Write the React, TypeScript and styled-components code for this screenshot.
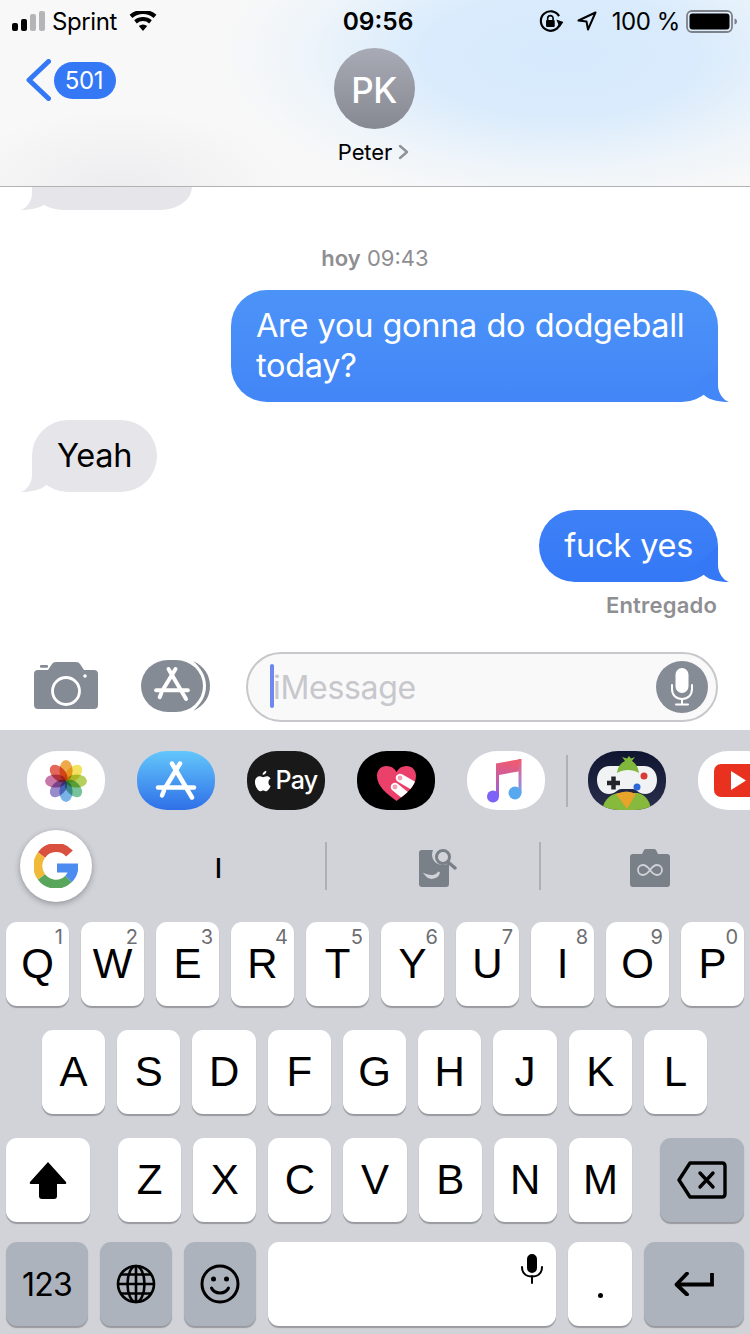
import React from 'react';
import styled, { createGlobalStyle } from 'styled-components';

const Global = createGlobalStyle`
  html, body { margin: 0; padding: 0; background: #fff; }
  * { box-sizing: border-box; }
`;

const Screen = styled.div`
  width: 750px; height: 1334px; overflow: hidden; display: flex; flex-direction: column;
  font-family: Inter, "Liberation Sans", sans-serif; color: #000; background: #fff;
`;

/* header */
const Header = styled.header`
  position: relative; z-index: 1;
  height: 187px; flex: none; display: flex; flex-direction: column;
  border-bottom: 1px solid #b2b2b4;
  background:
    radial-gradient(ellipse 170px 80px at 120px 190px, rgba(225,225,230,.5), rgba(225,225,230,0) 100%),
    radial-gradient(ellipse 340px 150px at 560px 55px, #d6eafd 0%, #d9ebfc 40%, rgba(226,240,252,.45) 75%, rgba(248,248,248,0) 100%),
    #f8f8f8;
`;
const StatusBar = styled.div`
  height: 42px; display: grid; grid-template-columns: 1fr auto 1fr; align-items: center; padding: 0 12px 0 12px; font-size: 24px;
`;
const StatusLeft = styled.div`display: flex; align-items: center; gap: 8px;`;
const StatusRight = styled.div`display: flex; align-items: center; justify-content: flex-end; gap: 12px;`;
const Carrier = styled.span`margin-right: 4px; letter-spacing: -.4px; margin-left: -1px;`;
const Clock = styled.span`font-weight: 600; font-size: 24.500px; margin-left: 6px;`;
const Percent = styled.span`letter-spacing: -.4px; margin-left: 3px; margin-right: -6px;`;
const Bars = styled.div`display: flex; align-items: flex-end; gap: 3px; height: 20px;`;
const Bar = styled.i<{ $h: number; $on?: boolean }>`
  display: block; width: 6px; height: ${p => p.$h}px; border-radius: 2px; background: ${p => (p.$on ? '#000' : '#b5b5b7')};
`;
const NavRow = styled.div`
  flex: 1; display: grid; grid-template-columns: 1fr auto 1fr; padding: 6px 28px 0 26px;
`;
const Back = styled.div`display: flex; align-items: center; gap: 3px; height: 40px; margin-top: 12px; align-self: start;`;
const Badge = styled.span`
  width: 62px; height: 37px; border-radius: 19px; background: #3478f6; color: #fff; font-size: 24px; padding-right: 2px;
  display: flex; align-items: center; justify-content: center; letter-spacing: -.3px;
`;
const Contact = styled.div`display: flex; flex-direction: column; align-items: center;`;
const Avatar = styled.div`
  width: 81px; height: 81px; border-radius: 50%; background: linear-gradient(#a8abb5, #868991); color: #fff;
  font-size: 35px; font-weight: 500; padding-top: 2px; letter-spacing: -.5px;
  display: flex; align-items: center; justify-content: center;
`;
const ContactName = styled.div`
  display: flex; align-items: center; gap: 6px; margin-top: 9px; font-size: 22px; line-height: 28px; letter-spacing: -.1px; margin-left: -1px;
`;

/* thread */
const Thread = styled.main`
  flex: 1; min-height: 0; display: flex; flex-direction: column; padding: 0 32px;
`;
const CutBubble = styled.div`
  position: relative; width: 160px; height: 23px; background: #e5e5ea; border-radius: 0 0 32px 32px / 0 0 23px 23px; flex: none;
`;
const Stamp = styled.div`
  margin-top: 34px; text-align: center; font-size: 22px; line-height: 28px; color: #8e8e93;
  b { font-weight: 600; }
`;
const Bubble = styled.div<{ $me?: boolean; $bg: string; $fg: string }>`
  position: relative; align-self: ${p => (p.$me ? 'flex-end' : 'flex-start')}; max-width: 487px;
  margin-top: 18px; padding: 16px 25px 16px; border-radius: 36px; font-size: 32.500px; line-height: 40px;
  background: ${p => p.$bg}; color: ${p => p.$fg}; letter-spacing: -.3px; word-spacing: .6px;
`;
const TailSvg = styled.svg<{ $me?: boolean; $c: string }>`
  position: absolute; bottom: 0; width: 36px; height: 36px; fill: ${p => p.$c};
  ${p => (p.$me ? 'right: -12px;' : 'left: -12px; transform: scaleX(-1);')}
`;
const Delivered = styled.div`
  align-self: flex-end; font-size: 22px; font-weight: 600; color: #8e8e93; line-height: 28px; margin-top: 9px; margin-right: 1px; letter-spacing: .2px;
`;
const Tail: React.FC<{ me?: boolean; c: string }> = ({ me, c }) => (
  <TailSvg $me={me} $c={c} viewBox="0 0 36 36"><path d="M24 0V19C24 27 29 34 35 36C28 36 16 35 10 29L0 22Z" /></TailSvg>
);

/* composer */
const Composer = styled.div`
  height: 90px; flex: none; display: flex; align-items: flex-start; padding: 12px 32px 0 34px;
`;
const CameraBtn = styled.svg`width: 64px; height: 47px; margin-top: 10px; fill: #858b95; flex: none;`;
const StoreBtn = styled.svg`width: 70px; height: 52px; margin: 8px 0 0 43px; flex: none;`;
const Field = styled.div`
  flex: 1; margin-left: 35px; height: 70px; border: 2px solid #c8c8cc; border-radius: 35px; background: #f9f9f9;
  display: flex; align-items: center; padding: 0 8px 0 22px; position: relative;
`;
const Caret = styled.i`display: block; width: 4px; height: 44px; border-radius: 2px; background: #6f88ef; margin-top: -2px;`;
const Placeholder = styled.span`flex: 1; font-size: 32px; color: #c7c7cc; letter-spacing: -.3px; margin-left: -1px;`;
const MicCircle = styled.div`
  width: 52px; height: 52px; border-radius: 50%; background: #868c96; display: flex; align-items: center; justify-content: center;
`;

/* keyboard */
const Keyboard = styled.section`height: 604px; flex: none; background: #d1d3d9; display: flex; flex-direction: column;`;
const AppStrip = styled.div`
  height: 100px; flex: none; padding: 21px 0 0 27px; display: flex; align-items: flex-start; gap: 32px; overflow: hidden;
`;
const AppIcon = styled.div<{ $bg: string }>`
  position: relative; width: 78px; height: 59px; flex: none; border-radius: 30px / 28px; overflow: hidden; background: ${p => p.$bg};
  display: flex; align-items: center; justify-content: center; color: #fff;
`;
const AppSep = styled.i`display: block; width: 2px; height: 52px; background: #aeb1b7; margin: 4px -12px 0 -11px; flex: none;`;
const PayLabel = styled.span`font-size: 25px; font-weight: 500; letter-spacing: -.7px; margin-left: 3px; padding-bottom: 1px;`;
const Petal = styled.ellipse`mix-blend-mode: multiply;`;
const Suggest = styled.div`
  height: 92px; flex: none; display: grid; grid-template-columns: 72px 1fr 2px 212px 2px 209px; align-items: start; padding-left: 20px;
`;
const GoogleBtn = styled.div`
  width: 72px; height: 72px; border-radius: 50%; background: #fff; box-shadow: 0 2px 6px rgba(0,0,0,.3);
  display: flex; align-items: center; justify-content: center;
`;
const SuggestCell = styled.div<{ $pl: number }>`
  height: 72px; display: flex; align-items: center; justify-content: center; font-size: 27px; font-weight: 500; padding: 4px 0 0 ${p => p.$pl}px;
`;
const SuggestDiv = styled.i`display: block; width: 2px; height: 48px; margin-top: 12px; background: #adb0b6;`;
const Rows = styled.div`display: flex; flex-direction: column; gap: 24px;`;
const Row = styled.div<{ $l?: number; $r?: number; $gap?: number; $top?: number }>`
  display: flex; gap: ${p => p.$gap ?? 12}px; padding: 0 ${p => p.$r ?? 6}px 0 ${p => p.$l ?? 6}px; height: 84px; margin-top: ${p => p.$top ?? 0}px;
`;
const Key = styled.div<{ $w?: number; $dark?: boolean }>`
  position: relative; ${p => (p.$w ? `width: ${p.$w}px; flex: none;` : 'flex: 1 1 0; min-width: 0;')}
  height: 84px; border-radius: 11px; background: ${p => (p.$dark ? '#adb3bc' : '#fff')};
  box-shadow: 0 2px 1px #989a9f; display: flex; align-items: center; justify-content: center;
  font-family: "Liberation Sans", Arial, sans-serif; font-size: 42px; color: #000;
`;
const Digit = styled.span`
  position: absolute; top: 3px; right: 6px; font-size: 20px; line-height: 24px; color: #6d6e72; font-family: Inter, sans-serif;
`;
const SmallText = styled.span`font-size: 32px; font-family: Inter, sans-serif; letter-spacing: -.8px;`;
const Dot = styled.span`width: 5px; height: 5px; border-radius: 50%; background: #000; margin-top: 22px;`;
const SpaceMic = styled.svg`position: absolute; right: 12px; top: 12px; width: 24px; height: 30px;`;
const ZRow = styled.div`display: flex; flex: 1; gap: 12px; margin: 0 28px;`;

const top = ['Q','W','E','R','T','Y','U','I','O','P'];
const mid = ['A','S','D','F','G','H','J','K','L'];
const low = ['Z','X','C','V','B','N','M'];

const AGlyph: React.FC<{ s?: string; w?: number }> = ({ s = '#fff', w = 4.5 }) => (
  <g stroke={s} strokeWidth={w} strokeLinecap="round" fill="none">
    <path d="M-4 -17L16 17" /><path d="M4 -17L-10 6" /><path d="M-18 7H18" /><path d="M-12 10L-14 15" />
  </g>
);

const Petals = () => {
  const cs = ['#efa84a','#f3e25f','#b5d05c','#79c39a','#78b2e6','#9a8ccc','#c678a8','#e2685a'];
  return (
    <svg width="42" height="42" viewBox="-21 -21 42 42" style={{ isolation: 'isolate' }}>
      {cs.map((c, i) => <Petal key={c} cx="0" cy="-10.500" rx="6.600" ry="10.500" fill={c} transform={`rotate(${i * 45})`} />)}
    </svg>
  );
};

export default function App() {
  return (
    <Screen>
      <Global />
      <Header>
        <StatusBar>
          <StatusLeft>
            <Bars><Bar $h={8} $on /><Bar $h={12} $on /><Bar $h={17} /><Bar $h={20} /></Bars>
            <Carrier>Sprint</Carrier>
            <svg width="28" height="20" viewBox="0 0 28 20"><path d="M14 20l-4.200-5a6.400 6.400 0 0 1 8.400 0z M7.800 12.400L5.200 9.200a13.400 13.400 0 0 1 17.600 0l-2.600 3.200a9.400 9.400 0 0 0-12.400 0z M3.400 7L.6 3.800a20.400 20.400 0 0 1 26.800 0L24.600 7a16.200 16.200 0 0 0-21.200 0z" /></svg>
          </StatusLeft>
          <Clock>09:56</Clock>
          <StatusRight>
            <svg width="26" height="24" viewBox="0 0 24 22" fill="none" stroke="#000" strokeWidth="2">
              <path d="M19 14.500A9 9 0 1 1 18.500 6.500" /><path d="M16 9.500L22.500 12L19 17z" fill="#000" stroke="none" />
              <rect x="6.500" y="10" width="8" height="6.500" rx="1" fill="#000" stroke="none" /><path d="M8 10.500V8.500a2.500 2.500 0 0 1 5 0v2" strokeWidth="1.500" />
            </svg>
            <svg width="20" height="20" viewBox="0 0 20 20" fill="none" stroke="#000" strokeWidth="2" strokeLinejoin="round"><path d="M18.500 1.500L1.500 9.500L9.500 10.500L11 18.500z" /></svg>
            <Percent>100 %</Percent>
            <svg width="52" height="23" viewBox="0 0 52 23">
              <rect x="1" y="1" width="45" height="21" rx="5" fill="none" stroke="#7d8189" strokeWidth="1.800" />
              <rect x="3.500" y="3.500" width="40" height="16" rx="3" fill="#000" />
              <path d="M48.500 8.500c1.600.4 2.500 1.400 2.500 3s-.9 2.600-2.500 3z" fill="#7d8189" />
            </svg>
          </StatusRight>
        </StatusBar>
        <NavRow>
          <Back>
            <svg width="25" height="42" viewBox="0 0 25 42" fill="none" stroke="#3478f6" strokeWidth="5" strokeLinecap="round" strokeLinejoin="round"><path d="M22.500 2.500L3 21L22.500 39.500" /></svg>
            <Badge>501</Badge>
          </Back>
          <Contact>
            <Avatar>PK</Avatar>
            <ContactName>Peter
              <svg width="11" height="16" viewBox="0 0 11 16" fill="none" stroke="#8f9298" strokeWidth="2.400" strokeLinecap="round" strokeLinejoin="round"><path d="M2 2l7 6-7 6" /></svg>
            </ContactName>
          </Contact>
          <div />
        </NavRow>
      </Header>

      <Thread>
        <CutBubble><Tail c="#e5e5ea" /></CutBubble>
        <Stamp><b>hoy</b> 09:43</Stamp>
        <Bubble $me $bg="linear-gradient(#4c93f8,#4286f7)" $fg="#fff">
          Are you gonna do dodgeball today?
          <Tail me c="#4286f7" />
        </Bubble>
        <Bubble $bg="#e5e5ea" $fg="#000">Yeah<Tail c="#e5e5ea" /></Bubble>
        <Bubble $me $bg="linear-gradient(#3e81f6,#3478f6)" $fg="#fff">fuck yes<Tail me c="#3478f6" /></Bubble>
        <Delivered>Entregado</Delivered>
      </Thread>

      <Composer>
        <CameraBtn viewBox="0 0 64 47">
          <rect x="6" y="3" width="8" height="2.800" rx="1" />
          <path d="M4 8H14L18 2Q19 0 22 0H42Q45 0 46 2L50 8H60Q64 8 64 12V43Q64 47 60 47H4Q0 47 0 43V12Q0 8 4 8z" />
          <circle cx="32" cy="29" r="13.500" fill="none" stroke="#fff" strokeWidth="2.800" />
          <circle cx="51" cy="14" r="1.800" fill="#fff" />
        </CameraBtn>
        <StoreBtn viewBox="0 0 70 52">
          <path d="M52 1C63 6 69 15 69 26S63 46 52 51C59 45 65 37 65 26S59 7 52 1z" fill="#858b95" />
          <rect x="0" y="0" width="64" height="52" rx="27" fill="#fff" />
          <rect x="0" y="0" width="62" height="52" rx="27" fill="#858b95" />
          <g transform="translate(31 24) scale(.88)"><AGlyph /></g>
        </StoreBtn>
        <Field>
          <Caret />
          <Placeholder>iMessage</Placeholder>
          <MicCircle>
            <svg width="24" height="38" viewBox="0 0 24 38" fill="none" stroke="#fff" strokeWidth="2" strokeLinecap="round"><rect x="6.500" y="1" width="11" height="23" rx="5.500" fill="#fff" /><path d="M2 17v4c0 6 4 10 10 10s10-4 10-10v-4M12 31v5M6 36.500h12" /></svg>
          </MicCircle>
        </Field>
      </Composer>

      <Keyboard>
        <AppStrip>
          <AppIcon $bg="#fff"><Petals /></AppIcon>
          <AppIcon $bg="linear-gradient(#63c7fb,#2f6fe8)">
            <svg width="78" height="59" viewBox="-39 -29.500 78 59"><AGlyph /></svg>
          </AppIcon>
          <AppIcon $bg="#191919">
            <svg width="18" height="22" viewBox="0 0 20 26"><path fill="#fff" d="M14 1c.2 2.500-2 5-4.500 5C9.200 3.500 11.500 1.300 14 1zM19 19c-1 2.500-3 6-5.200 6-1.400 0-2-.9-3.600-.9s-2.200.9-3.600.9C4 25 .500 19 .500 14.500 .500 9.800 3.500 7.500 6.400 7.500c1.500 0 2.800 1 3.800 1s2.400-1.100 4.200-1.100c1.500 0 3.500.7 4.600 2.500-3.600 2.100-3.200 7.600 0 9.100z" /></svg>
            <PayLabel>Pay</PayLabel>
          </AppIcon>
          <AppIcon $bg="#000">
            <svg width="78" height="59" viewBox="0 0 78 59">
              <defs><clipPath id="hc"><path d="M39.500 50C30 43 20 35 20 25C20 19 24 15 29.500 15C34 15 37.500 17 39.500 21C41.500 17 45 15 49.500 15C55 15 59 19 59 25C59 35 49 43 39.500 50z" /></clipPath></defs>
              <path fill="#ea4069" d="M39.500 50C30 43 20 35 20 25C20 19 24 15 29.500 15C34 15 37.500 17 39.500 21C41.500 17 45 15 49.500 15C55 15 59 19 59 25C59 35 49 43 39.500 50z" />
              <g clipPath="url(#hc)">
                <path d="M43 27L62 38M38 36L54 49" stroke="#fff" strokeWidth="8.500" strokeLinecap="round" />
                <circle cx="43" cy="27" r="2.400" fill="#f59db5" /><circle cx="38" cy="36" r="2.400" fill="#f59db5" />
              </g>
            </svg>
          </AppIcon>
          <AppIcon $bg="#fff">
            <svg width="78" height="59" viewBox="0 0 78 59">
              <defs>
                <linearGradient id="mn" gradientUnits="userSpaceOnUse" x1="35" y1="8" x2="26" y2="52"><stop offset="0" stopColor="#f05a6e" /><stop offset=".5" stopColor="#c05fb0" /><stop offset="1" stopColor="#7c62f6" /></linearGradient>
                <linearGradient id="mb" gradientUnits="userSpaceOnUse" x1="50" y1="8" x2="50" y2="48"><stop offset="0" stopColor="#f05a6e" /><stop offset=".5" stopColor="#b77cc4" /><stop offset="1" stopColor="#58a8f0" /></linearGradient>
              </defs>
              <path fill="url(#mn)" d="M29 12.500L54 8V20L32 24V46H29z" />
              <rect x="51.500" y="8" width="3" height="34" fill="url(#mb)" />
              <circle cx="26" cy="45.500" r="6" fill="#7c62f6" />
              <circle cx="48" cy="42" r="6.500" fill="#58a8f0" />
            </svg>
          </AppIcon>
          <AppSep />
          <AppIcon $bg="linear-gradient(#0f1430,#2a2f4c)">
            <svg width="78" height="59" viewBox="0 0 78 59">
              <path d="M14 59C16 50 20 44 30 42H50C58 44 62 50 63 59z" fill="#86b93c" />
              <path d="M22 15H56C64 15 69 21 69 29C69 37 64 43 57 43C51 43 48 38 45 38H33C30 38 27 43 21 43C14 43 9 37 9 29C9 21 14 15 22 15z" fill="#f1f2f3" />
              <path d="M29 22C30 15 33 12 37 10L34 6L39 7.500L41 5L43 7.500L47 6L44 10C47 12 50 15 51 22C45 18 35 18 29 22z" fill="#7fb63c" />
              <path d="M19 32H32M25.500 25.500V38.500" stroke="#24262c" strokeWidth="4.500" />
              <circle cx="56" cy="25" r="3.500" fill="#d83a35" /><circle cx="49" cy="36" r="3.500" fill="#2c66d8" />
              <path d="M28 43Q39 38 48 43L39 58z" fill="#e7a32a" />
            </svg>
          </AppIcon>
          <AppIcon $bg="#fff">
            <svg width="78" height="59" viewBox="0 0 78 59"><rect x="16" y="13" width="50" height="33" rx="7" fill="#e8321f" /><path d="M33 20L48 29.500L33 39z" fill="#fff" /></svg>
          </AppIcon>
        </AppStrip>

        <Suggest>
          <GoogleBtn>
            <svg width="44" height="44" viewBox="0 0 44 44" fill="none" strokeWidth="9">
              <path d="M35.500 9.500A18 18 0 0 0 7.500 11" stroke="#d9503f" />
              <path d="M7.500 11A18 18 0 0 0 7.500 33" stroke="#f0b93a" />
              <path d="M7.500 33A18 18 0 0 0 34.500 35" stroke="#58a65c" />
              <path d="M34.500 35A18 18 0 0 0 39.800 24H23" stroke="#4c8bf0" />
            </svg>
          </GoogleBtn>
          <SuggestCell $pl={20}>I</SuggestCell>
          <SuggestDiv />
          <SuggestCell $pl={8}>
            <svg width="40" height="40" viewBox="0 0 40 40">
              <path fill="#7a8087" d="M2 5q0-3 3-3h11c-2 5-1 11 5 14 4 2 9 1 11-1v21q0 3-3 3H5q-3 0-3-3z" />
              <path d="M9 27c5 2 10 1 13-3-1 6-9 8-13 3z" fill="#d1d3d9" stroke="#d1d3d9" strokeWidth="2" />
              <circle cx="26" cy="9" r="6.500" fill="none" stroke="#7a8087" strokeWidth="3" /><path d="M31 14l7 6" stroke="#7a8087" strokeWidth="3.400" strokeLinecap="round" />
            </svg>
          </SuggestCell>
          <SuggestDiv />
          <SuggestCell $pl={8}>
            <svg width="40" height="38" viewBox="0 0 40 38">
              <path fill="#7a8087" d="M3 5h9l2-4q.5-1 2-1h8q1.500 0 2 1l2 4h9q3 0 3 3v27q0 3-3 3H3q-3 0-3-3V8q0-3 3-3z" />
              <path d="M20 21c-3-4-5-5-7-5a4.500 4.500 0 0 0 0 10c2 0 4-1 7-5s5-5 7-5a4.500 4.500 0 0 1 0 10c-2 0-4-1-7-5z" fill="none" stroke="#cfd2d7" strokeWidth="1.800" />
            </svg>
          </SuggestCell>
        </Suggest>

        <Rows>
          <Row>{top.map((k, i) => <Key key={k}>{k}<Digit>{(i + 1) % 10}</Digit></Key>)}</Row>
          <Row $l={42} $r={43}>{mid.map(k => <Key key={k}>{k}</Key>)}</Row>
          <Row $gap={0}>
            <Key $w={84}>
              <svg width="38" height="38" viewBox="0 0 38 38"><path d="M19 1L37 21q1 2-1.500 2H28v12q0 3-3 3H13q-3 0-3-3V23H2.500Q0 23 1 21z" /></svg>
            </Key>
            <ZRow>{low.map(k => <Key key={k}>{k}</Key>)}</ZRow>
            <Key $w={84} $dark>
              <svg width="50" height="38" viewBox="0 0 50 38" fill="none" stroke="#000" strokeWidth="3.400" strokeLinejoin="round"><path d="M13 2H45q3 0 3 3V33q0 3-3 3H13L2 19z" /><path d="M23 12l13 14M36 12L23 26" strokeLinecap="round" /></svg>
            </Key>
          </Row>
          <Row $top={-4}>
            <Key $w={82} $dark><SmallText>123</SmallText></Key>
            <Key $w={72} $dark>
              <svg width="40" height="40" viewBox="0 0 40 40" fill="none" stroke="#000" strokeWidth="2.600"><circle cx="20" cy="20" r="18" /><ellipse cx="20" cy="20" rx="8.500" ry="18" /><path d="M20 2v36M2 20h36M5 10.500h30M5 29.500h30" /></svg>
            </Key>
            <Key $w={72} $dark>
              <svg width="40" height="40" viewBox="0 0 40 40" fill="none" stroke="#000" strokeWidth="3"><circle cx="20" cy="20" r="18" /><circle cx="13.500" cy="15" r="2.500" fill="#000" stroke="none" /><circle cx="26.500" cy="15" r="2.500" fill="#000" stroke="none" /><path d="M11.500 24c3 6.500 14 6.500 17 0" strokeLinecap="round" /></svg>
            </Key>
            <Key $w={288}>
              <SpaceMic viewBox="0 0 24 30" fill="none" stroke="#000" strokeWidth="2"><rect x="8" y="1" width="8" height="17" rx="4" fill="#000" /><path d="M2 13c0 6 4 9.500 10 9.500S22 19 22 13M12 22v7" strokeLinecap="round" /></SpaceMic>
            </Key>
            <Key $w={64}><Dot /></Key>
            <Key $w={100} $dark>
              <svg width="40" height="24" viewBox="0 0 40 24" fill="none" stroke="#000" strokeWidth="3.800"><path d="M38 1v11.500H3" /><path d="M13 1.500L2.500 12.500L13 22.500" strokeLinecap="round" strokeLinejoin="round" /></svg>
            </Key>
          </Row>
        </Rows>
      </Keyboard>
    </Screen>
  );
}
